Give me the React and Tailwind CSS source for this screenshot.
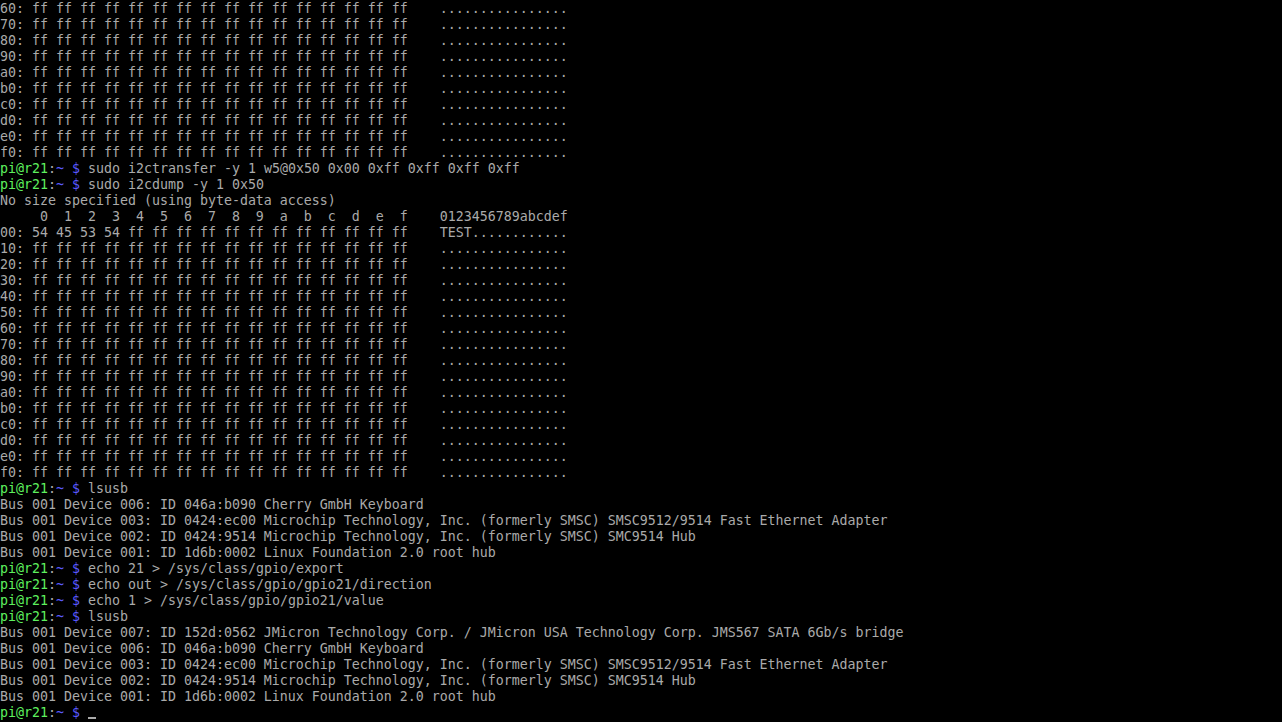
import React from 'react';

const ff16 = Array(16).fill('ff').join(' ');
const hexRow = (addr) => `${addr}: ${ff16}    ................`;

const topRows = ['60', '70', '80', '90', 'a0', 'b0', 'c0', 'd0', 'e0', 'f0'];
const dumpRows = ['10', '20', '30', '40', '50', '60', '70', '80', '90', 'a0', 'b0', 'c0', 'd0', 'e0', 'f0'];

// each entry: string = plain output, { cmd } = prompt line
const lines = [
  ...topRows.map(hexRow),
  { cmd: 'sudo i2ctransfer -y 1 w5@0x50 0x00 0xff 0xff 0xff 0xff' },
  { cmd: 'sudo i2cdump -y 1 0x50' },
  'No size specified (using byte-data access)',
  '     0  1  2  3  4  5  6  7  8  9  a  b  c  d  e  f    0123456789abcdef',
  '00: 54 45 53 54 ff ff ff ff ff ff ff ff ff ff ff ff    TEST............',
  ...dumpRows.map(hexRow),
  { cmd: 'lsusb' },
  'Bus 001 Device 006: ID 046a:b090 Cherry GmbH Keyboard',
  'Bus 001 Device 003: ID 0424:ec00 Microchip Technology, Inc. (formerly SMSC) SMSC9512/9514 Fast Ethernet Adapter',
  'Bus 001 Device 002: ID 0424:9514 Microchip Technology, Inc. (formerly SMSC) SMC9514 Hub',
  'Bus 001 Device 001: ID 1d6b:0002 Linux Foundation 2.0 root hub',
  { cmd: 'echo 21 > /sys/class/gpio/export' },
  { cmd: 'echo out > /sys/class/gpio/gpio21/direction' },
  { cmd: 'echo 1 > /sys/class/gpio/gpio21/value' },
  { cmd: 'lsusb' },
  'Bus 001 Device 007: ID 152d:0562 JMicron Technology Corp. / JMicron USA Technology Corp. JMS567 SATA 6Gb/s bridge',
  'Bus 001 Device 006: ID 046a:b090 Cherry GmbH Keyboard',
  'Bus 001 Device 003: ID 0424:ec00 Microchip Technology, Inc. (formerly SMSC) SMSC9512/9514 Fast Ethernet Adapter',
  'Bus 001 Device 002: ID 0424:9514 Microchip Technology, Inc. (formerly SMSC) SMC9514 Hub',
  'Bus 001 Device 001: ID 1d6b:0002 Linux Foundation 2.0 root hub',
];

const Prompt = () => (
  <>
    <span className="text-[#5ef05e]">pi@r21</span>
    <span className="text-[#aaaaaa]">:</span>
    <span className="text-[#5a5aff]">~ $</span>
    <span> </span>
  </>
);

export default function App() {
  return (
    <div
      className="w-[1282px] h-[722px] pt-px bg-black text-[#aaaaaa] text-[13.29px] leading-4 overflow-hidden"
      style={{ fontFamily: '"DejaVu Sans Mono", "Liberation Mono", monospace' }}
    >
      {lines.map((line, i) => (
        <div key={i} className="h-4 whitespace-pre">
          {typeof line === 'string' ? (
            line
          ) : (
            <>
              <Prompt />
              {line.cmd}
            </>
          )}
        </div>
      ))}
      <div className="h-4 whitespace-pre flex items-end">
        <div className="whitespace-pre self-start">
          <Prompt />
        </div>
        <span className="w-2 h-[2px] mb-[2px] bg-[#aaaaaa]" />
      </div>
    </div>
  );
}
